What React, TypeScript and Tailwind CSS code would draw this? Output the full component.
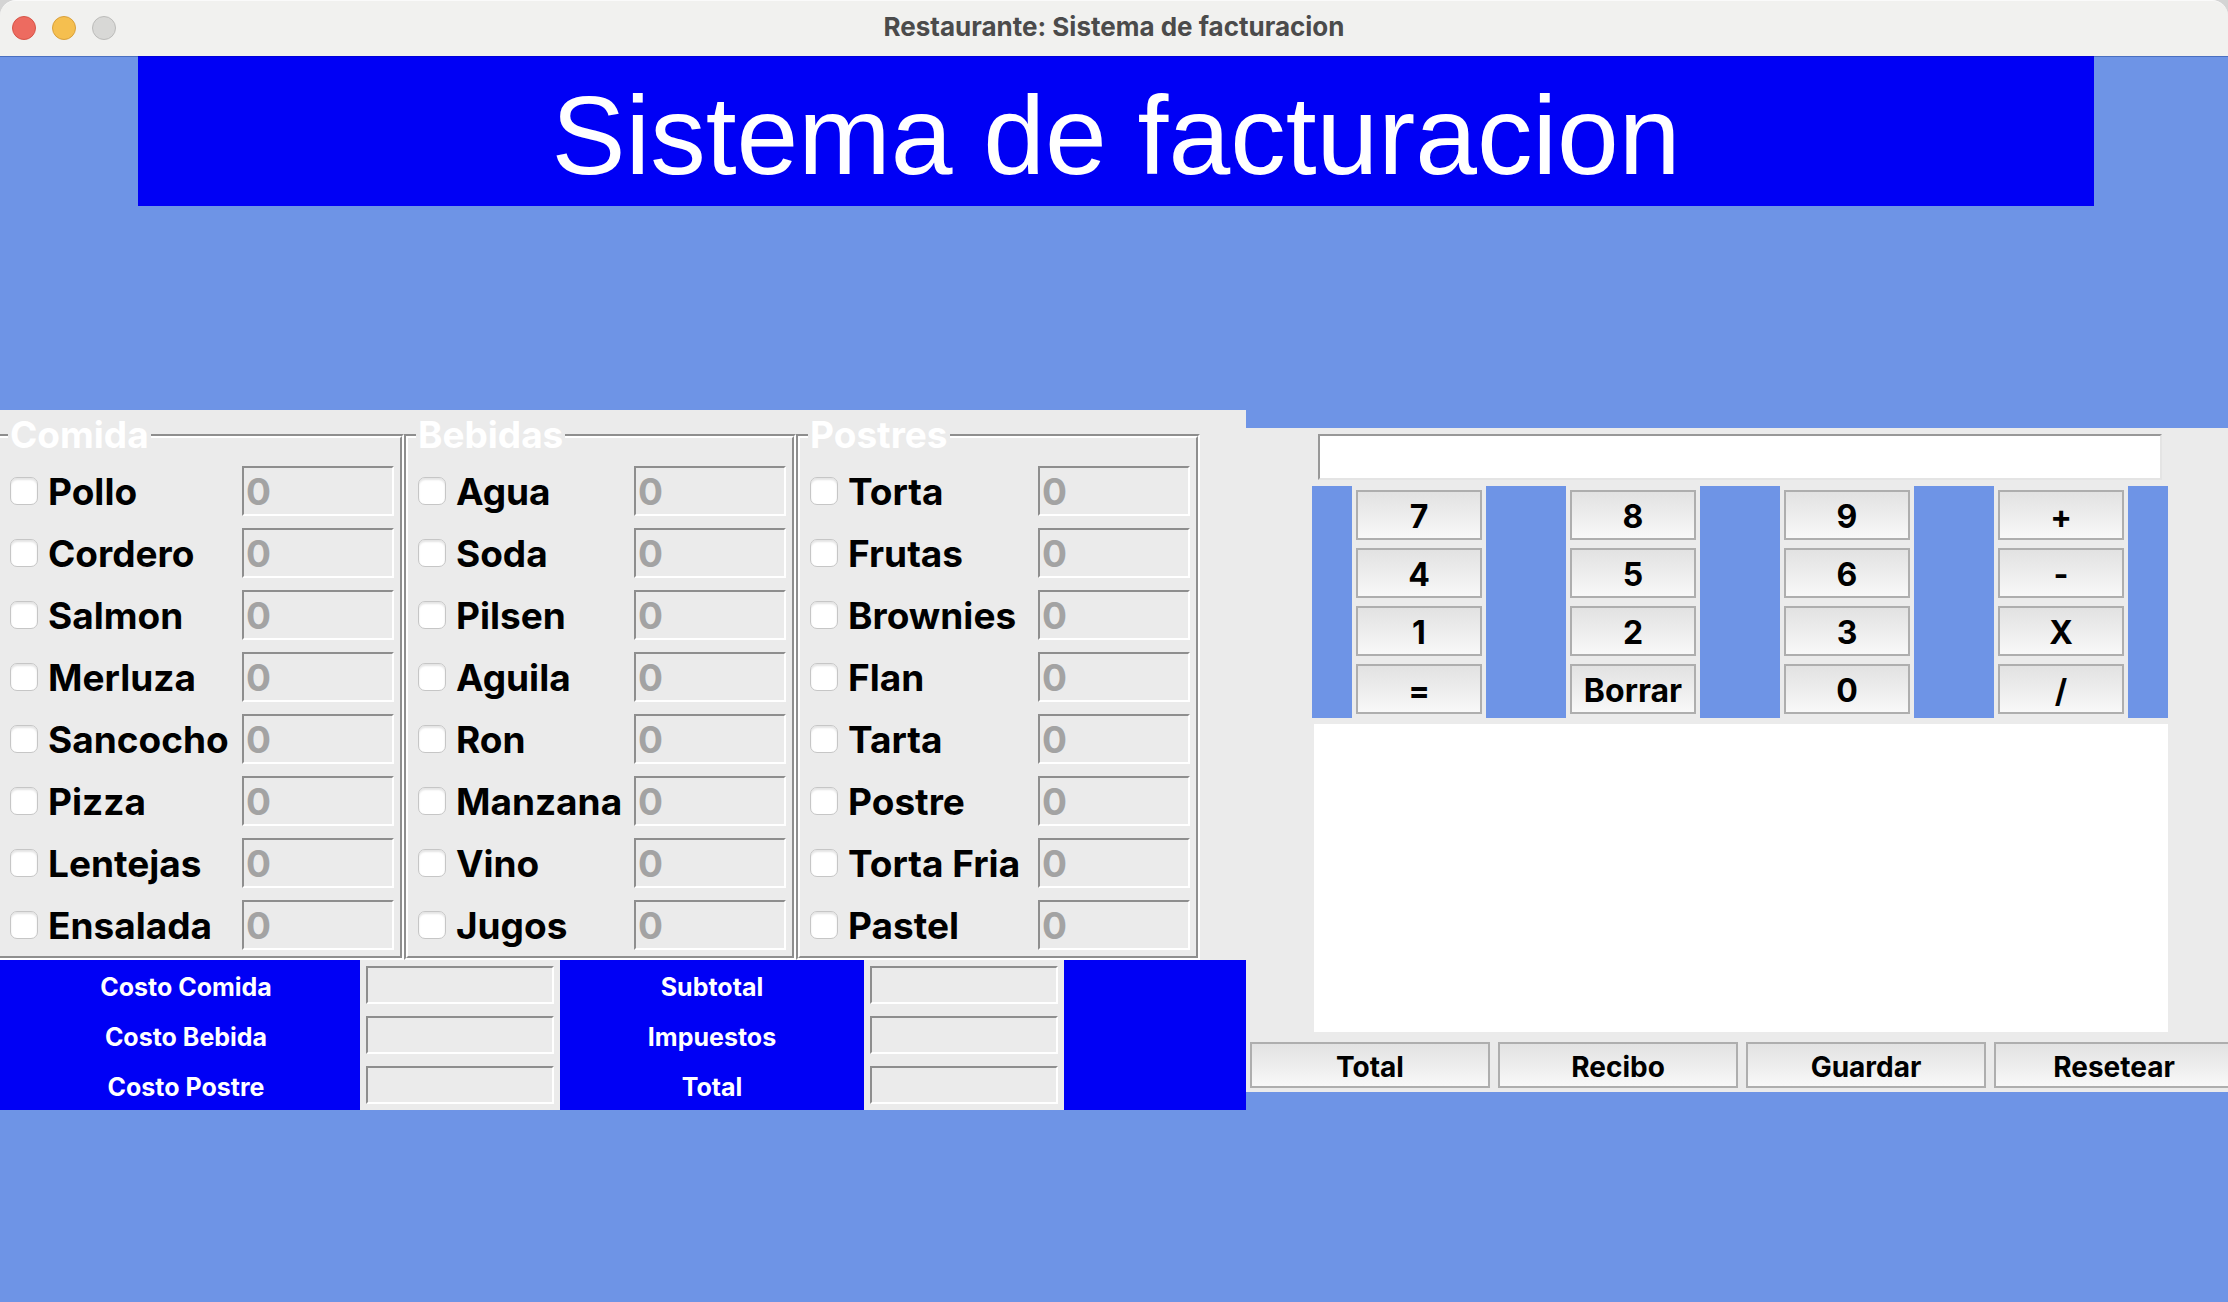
import React from "react";

type Group = { title: string; span: string; items: string[] };

const groups: Group[] = [
  {
    title: "Comida",
    span: "flex-[408]",
    items: ["Pollo", "Cordero", "Salmon", "Merluza", "Sancocho", "Pizza", "Lentejas", "Ensalada"],
  },
  {
    title: "Bebidas",
    span: "flex-[392]",
    items: ["Agua", "Soda", "Pilsen", "Aguila", "Ron", "Manzana", "Vino", "Jugos"],
  },
  {
    title: "Postres",
    span: "flex-[404]",
    items: ["Torta", "Frutas", "Brownies", "Flan", "Tarta", "Postre", "Torta Fria", "Pastel"],
  },
];

const costs = [
  ["Costo Comida", "Subtotal"],
  ["Costo Bebida", "Impuestos"],
  ["Costo Postre", "Total"],
];

const keypad = [
  ["7", "4", "1", "="],
  ["8", "5", "2", "Borrar"],
  ["9", "6", "3", "0"],
  ["+", "-", "X", "/"],
];

const actions = ["Total", "Recibo", "Guardar", "Resetear"];

const sunken = "border-2 border-t-[#8e8e8e] border-l-[#8e8e8e] border-r-white border-b-white";

function TitleBar() {
  return (
    <div className="bg-[#d4d4d4]">
      <div className="relative flex h-14 items-center justify-center rounded-t-2xl border-t border-[#fafafa] bg-[#f1f1ef] pb-[3px]">
        <div className="absolute top-[15px] left-3 flex gap-4">
          <button aria-label="Cerrar" className="size-6 rounded-full border border-[#d65548] bg-[#ed6b60]" />
          <button aria-label="Minimizar" className="size-6 rounded-full border border-[#d9a03b] bg-[#f5bf4f]" />
          <button aria-label="Ampliar" className="size-6 rounded-full border border-[#bcbcba] bg-[#d8d8d6]" />
        </div>
        <span className="text-[26px] leading-8 font-bold text-[#4b4b4b]">Restaurante: Sistema de facturacion</span>
      </div>
    </div>
  );
}

function ItemGroup({ group }: { group: Group }) {
  return (
    <fieldset className={`min-w-0 border-2 border-t-[#8e8e8e] border-l-[#8e8e8e] border-r-white border-b-white ${group.span}`}>
      <legend className="relative z-10 ml-[10px] h-[50px] bg-[#ebebeb] px-[2px] text-[37px] leading-[50px] font-bold text-white">
        {group.title}
      </legend>
      <div className="-mt-6 border-2 border-t-white border-l-white border-r-[#8e8e8e] border-b-[#8e8e8e] pt-[22px]">
        {group.items.map((item) => (
          <div key={item} className="flex h-[62px] items-center pr-[6px] pl-[10px]">
            <label className="flex min-w-0 flex-1 items-center gap-[10px] text-[37px] leading-[50px] font-bold whitespace-nowrap text-black">
              <input
                type="checkbox"
                className="size-7 shrink-0 appearance-none rounded-[7px] border border-[#c6c6c6] bg-white shadow-[inset_0_2px_2px_#e4e4e4]"
              />
              <span className="pt-[2px]">{item}</span>
            </label>
            <input
              type="text"
              disabled
              defaultValue="0"
              aria-label={`Cantidad de ${item}`}
              className={`h-[50px] w-[152px] shrink-0 bg-[#ebebeb] px-[2px] text-[37px] leading-[46px] font-bold text-[#a3a3a3] ${sunken}`}
            />
          </div>
        ))}
      </div>
    </fieldset>
  );
}

function CostField({ label, pad }: { label: string; pad: string }) {
  const id = label.toLowerCase().replace(" ", "-");
  return (
    <>
      <label htmlFor={id} className={`flex h-[50px] items-center justify-center bg-[#0000f5] pt-1 text-[25px] leading-8 font-bold text-white ${pad}`}>
        {label}
      </label>
      <div className="flex h-[50px] items-center px-[6px]">
        <input id={id} type="text" readOnly className={`h-[38px] w-full bg-[#ebebeb] px-1 text-2xl font-bold ${sunken}`} />
      </div>
    </>
  );
}

const buttonLook = "w-full border-2 border-[#aeaeae] bg-linear-to-b from-[#e2e2e2] to-[#f8f8f8] pt-1 font-bold text-black";

export default function App() {
  return (
    <div className="flex min-h-screen flex-col overflow-hidden bg-[#6e94e6] font-['Inter',sans-serif]">
      <TitleBar />
      <header className="border-t border-[#4a6fc0]">
        <h1 className="-mt-px mr-[134px] ml-[138px] border-t border-[#0000d8] bg-[#0000f5] pt-[9px] text-center font-['Liberation_Sans',sans-serif] text-[111px] leading-[140px] text-white">
          Sistema de facturacion
        </h1>
      </header>
      <main className="flex flex-1 items-center pt-3">
        <section className="min-w-0 flex-[1246] bg-[#ebebeb]">
          <div className="-ml-1 flex pr-[46px]">
            {groups.map((group) => (
              <ItemGroup key={group.title} group={group} />
            ))}
          </div>
          <div className="grid grid-cols-[360fr_200px_304fr_200px_182fr]">
            {costs.map(([left, right]) => (
              <React.Fragment key={left}>
                <CostField label={left} pad="pl-3" />
                <CostField label={right} pad="pl-0" />
                <div className="bg-[#0000f5]" />
              </React.Fragment>
            ))}
          </div>
        </section>
        <section className="min-w-0 flex-[982] overflow-hidden bg-[#ebebeb] pt-[6px] pb-1">
          <div className="mr-[60px] ml-[66px]">
            <div className="px-[6px]">
              <input
                type="text"
                aria-label="Calculadora"
                className="block h-[46px] w-full border-2 border-t-[#989898] border-r-[#e4e4e4] border-b-[#e4e4e4] border-l-[#989898] bg-white px-1 text-[32px] font-bold"
              />
            </div>
            <div className="mt-[6px] grid grid-cols-4 bg-[#6e94e6]">
              {keypad.map((column) => (
                <div key={column[0]} className="mx-10 flex flex-col gap-2 bg-[#ebebeb] p-1">
                  {column.map((key) => (
                    <button key={key} className={`h-[50px] text-[32px] leading-[42px] ${buttonLook}`}>
                      {key}
                    </button>
                  ))}
                </div>
              ))}
            </div>
            <textarea aria-label="Recibo" className="mt-[6px] ml-[2px] block h-[308px] w-[calc(100%-2px)] resize-none bg-white p-1 text-2xl" />
          </div>
          <div className="mt-[10px] flex w-[calc(100%+10px)] gap-2 px-1">
            {actions.map((action) => (
              <button key={action} className={`h-[46px] text-[28px] leading-[38px] ${buttonLook}`}>
                {action}
              </button>
            ))}
          </div>
        </section>
      </main>
    </div>
  );
}
